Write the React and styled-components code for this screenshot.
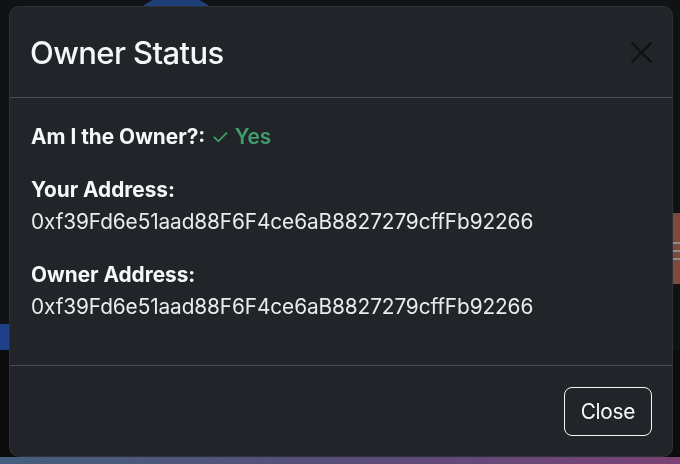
import React from "react";
import styled, { createGlobalStyle } from "styled-components";

const GlobalStyle = createGlobalStyle`
  html, body {
    margin: 0;
    padding: 0;
    background: #111214;
  }
  body {
    font-family: Inter, "Noto Sans", "Liberation Sans", sans-serif;
    -webkit-font-smoothing: antialiased;
  }
  * { box-sizing: border-box; }
`;

const Page = styled.div`
  display: flex;
  flex-direction: column;
  height: 464px;
  overflow: hidden;
`;

const TopArea = styled.div`
  flex: 0 0 350px;
  display: flex;
  background: #111214;
`;

const LeftRail = styled.div`
  width: 9px;
  display: flex;
  flex-direction: column;
  justify-content: flex-end;
`;

const BlueTab = styled.div`
  height: 26px;
  background: #1f3f88;
`;

const Avatar = styled.div`
  flex: 0 0 112px;
  height: 112px;
  margin: -5px 0 0 111px;
  border-radius: 50%;
  background: #1e3f78;
`;

const RightRail = styled.div`
  margin-left: auto;
  width: 7px;
  padding-top: 213px;
`;

const SideCard = styled.div`
  height: 71px;
  background: #7b4a3b;
  display: flex;
  flex-direction: column;
  gap: 6px;
  padding-top: 29px;
`;

const Stripe = styled.div`
  height: 2px;
  background: #8c8c8c;
`;

const LowerArea = styled.div`
  flex: 1;
  background: #0c0c0d;
`;

const GradientBar = styled.div`
  flex: 0 0 7px;
  background: linear-gradient(90deg, #44607f 0%, #584d7b 50%, #7a4275 100%);
`;

// modal
const Backdrop = styled.div`
  position: fixed;
  inset: 0;
  padding: 6px 0 0 9px;
`;

const Dialog = styled.div`
  width: 664px;
  height: 451px;
  display: flex;
  flex-direction: column;
  background: #212529;
  border: 1px solid rgba(255, 255, 255, 0.06);
  border-radius: 10px;
  color: #eef0f2;
`;

const Header = styled.div`
  display: flex;
  align-items: center;
  justify-content: space-between;
  padding: 21.5px 21px 21.5px 20px;
  border-bottom: 1px solid #4a4f55;
`;

const Title = styled.h4`
  margin: 0;
  font-size: 31px;
  line-height: 47px;
  font-weight: 500;
  letter-spacing: -0.6px;
  color: #f6f7f8;
`;

const CloseX = styled.button`
  width: 21px;
  height: 21px;
  padding: 0;
  margin-right: -1px;
  border: 0;
  background: none;
  opacity: 0.5;
  display: flex;
  cursor: pointer;
`;

const Body = styled.div`
  flex: 1;
  padding: 23px 21px 20px;
  font-size: 20.8px;
  line-height: 32px;
`;

const Row = styled.div`
  margin-bottom: 21px;
`;

const Label = styled.div`
  font-weight: 700;
  color: #f6f7f8;
`;

const Strong = styled.span`
  font-weight: 700;
  color: #f6f7f8;
`;

const Yes = styled.span`
  color: #3f9d69;
  font-weight: 600;
`;

const Check = styled.span`
  font-weight: 400;
`;

const Address = styled.div`
  color: #e9ecef;
  font-weight: 400;
  letter-spacing: -0.1px;
`;

const Footer = styled.div`
  display: flex;
  justify-content: flex-end;
  align-items: center;
  padding: 21px 20px 20px;
  border-top: 1px solid #4a4f55;
`;

const OutlineButton = styled.button`
  height: 49px;
  padding: 0 16px;
  font-family: inherit;
  font-size: 20.8px;
  letter-spacing: -0.3px;
  color: #f8f9fa;
  background: transparent;
  border: 1px solid #f1f3f5;
  border-radius: 8px;
  cursor: pointer;
`;

const ADDRESS = "0xf39Fd6e51aad88F6F4ce6aB8827279cffFb92266";

function App() {
  return (
    <>
      <GlobalStyle />
      <Page>
        <TopArea>
          <LeftRail>
            <BlueTab />
          </LeftRail>
          <Avatar />
          <RightRail>
            <SideCard>
              <Stripe />
              <Stripe />
              <Stripe />
            </SideCard>
          </RightRail>
        </TopArea>
        <LowerArea />
        <GradientBar />
      </Page>
      <Backdrop>
        <Dialog>
          <Header>
            <Title>Owner Status</Title>
            <CloseX aria-label="Close">
              <svg width="21" height="21" viewBox="0 0 16 16" fill="#000">
                <path d="M.293.293a1 1 0 0 1 1.414 0L8 6.586 14.293.293a1 1 0 1 1 1.414 1.414L9.414 8l6.293 6.293a1 1 0 0 1-1.414 1.414L8 9.414l-6.293 6.293a1 1 0 0 1-1.414-1.414L6.586 8 .293 1.707a1 1 0 0 1 0-1.414z" />
              </svg>
            </CloseX>
          </Header>
          <Body>
            <Row>
              <Strong>Am I the Owner?:</Strong>{" "}
              <Yes><Check>✓</Check> Yes</Yes>
            </Row>
            <Row>
              <Label>Your Address:</Label>
              <Address>{ADDRESS}</Address>
            </Row>
            <Row>
              <Label>Owner Address:</Label>
              <Address>{ADDRESS}</Address>
            </Row>
          </Body>
          <Footer>
            <OutlineButton>Close</OutlineButton>
          </Footer>
        </Dialog>
      </Backdrop>
    </>
  );
}

export default App;
